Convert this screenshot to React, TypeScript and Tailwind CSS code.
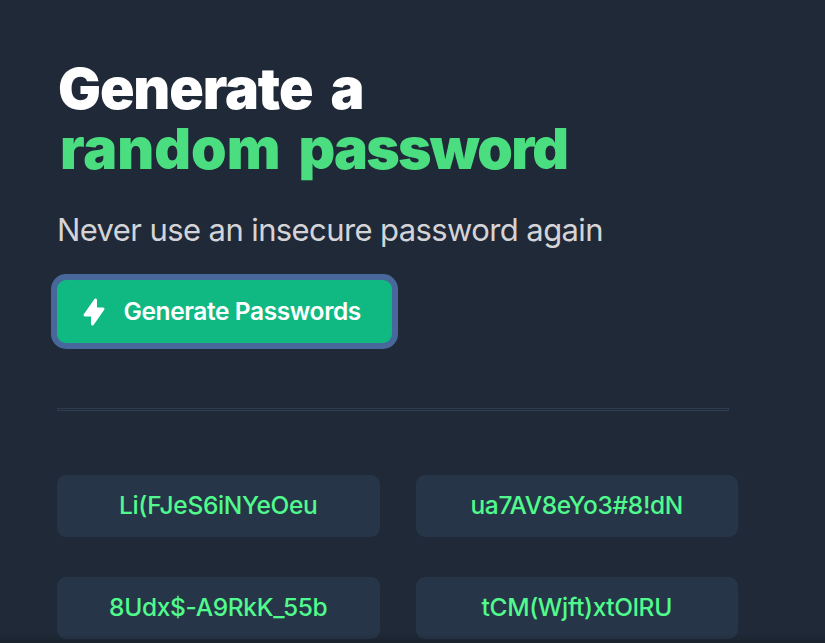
const passwords = ["Li(FJeS6iNYeOeu", "ua7AV8eYo3#8!dN", "8Udx$-A9RkK_55b", "tCM(Wjft)xtOlRU"];

export default function App() {
  return (
    <main className="relative h-[643px] w-[825px] overflow-hidden bg-[#1f2937] pl-[57px] pt-[59px] font-['Inter',sans-serif]">
      <h1 className="text-[57px] leading-[60px] font-black text-white">
        <div className="flex w-max gap-[18px] pl-px"><span className="tracking-[-1.1px]">Generate</span><span>a</span></div>
        <div className="flex w-max gap-[18px] pl-[3px] text-[#4ade80]"><span className="tracking-[0px]">random</span><span className="tracking-[-1.8px]">password</span></div>
      </h1>
      <p className="mt-[29px] w-max text-[31px] leading-[44px] tracking-[-0.6px] text-[#d4d4d8]">Never use an insecure password again</p>
      <button className="mt-[28px] flex h-[63px] w-[335px] items-center rounded-[9px] bg-[#10b981] pl-[22px] text-[24.5px] font-[580] tracking-[-0.4px] text-white ring-6 ring-[#48679a]">
        <svg viewBox="0 0 20 20" className="mr-[14.5px] size-[30px]" fill="currentColor">
          <path fillRule="evenodd" clipRule="evenodd" d="M11.3 1.046A1 1 0 0112 2v5h4a1 1 0 01.82 1.573l-7 10A1 1 0 018 18v-5H4a1 1 0 01-.82-1.573l7-10a1 1 0 011.12-.38z" />
        </svg>
        <span>Generate Passwords</span>
      </button>
      <hr className="mt-[65px] h-[3px] w-[672px] border border-[#2d3c50]" />
      <div className="mt-[64px] grid w-[681px] grid-cols-2 gap-x-[36px] gap-y-[40px]">
        {passwords.map((p) => (
          <div key={p} className="flex h-[62px] items-center justify-center rounded-[9px] bg-[#263548] pb-px text-[24.5px] font-[550] tracking-[-0.35px] text-[#50fa8c]">{p}</div>
        ))}
      </div>
      <div className="absolute inset-x-0 bottom-0 h-[10px] bg-linear-to-b from-transparent to-black/15" />
    </main>
  );
}
